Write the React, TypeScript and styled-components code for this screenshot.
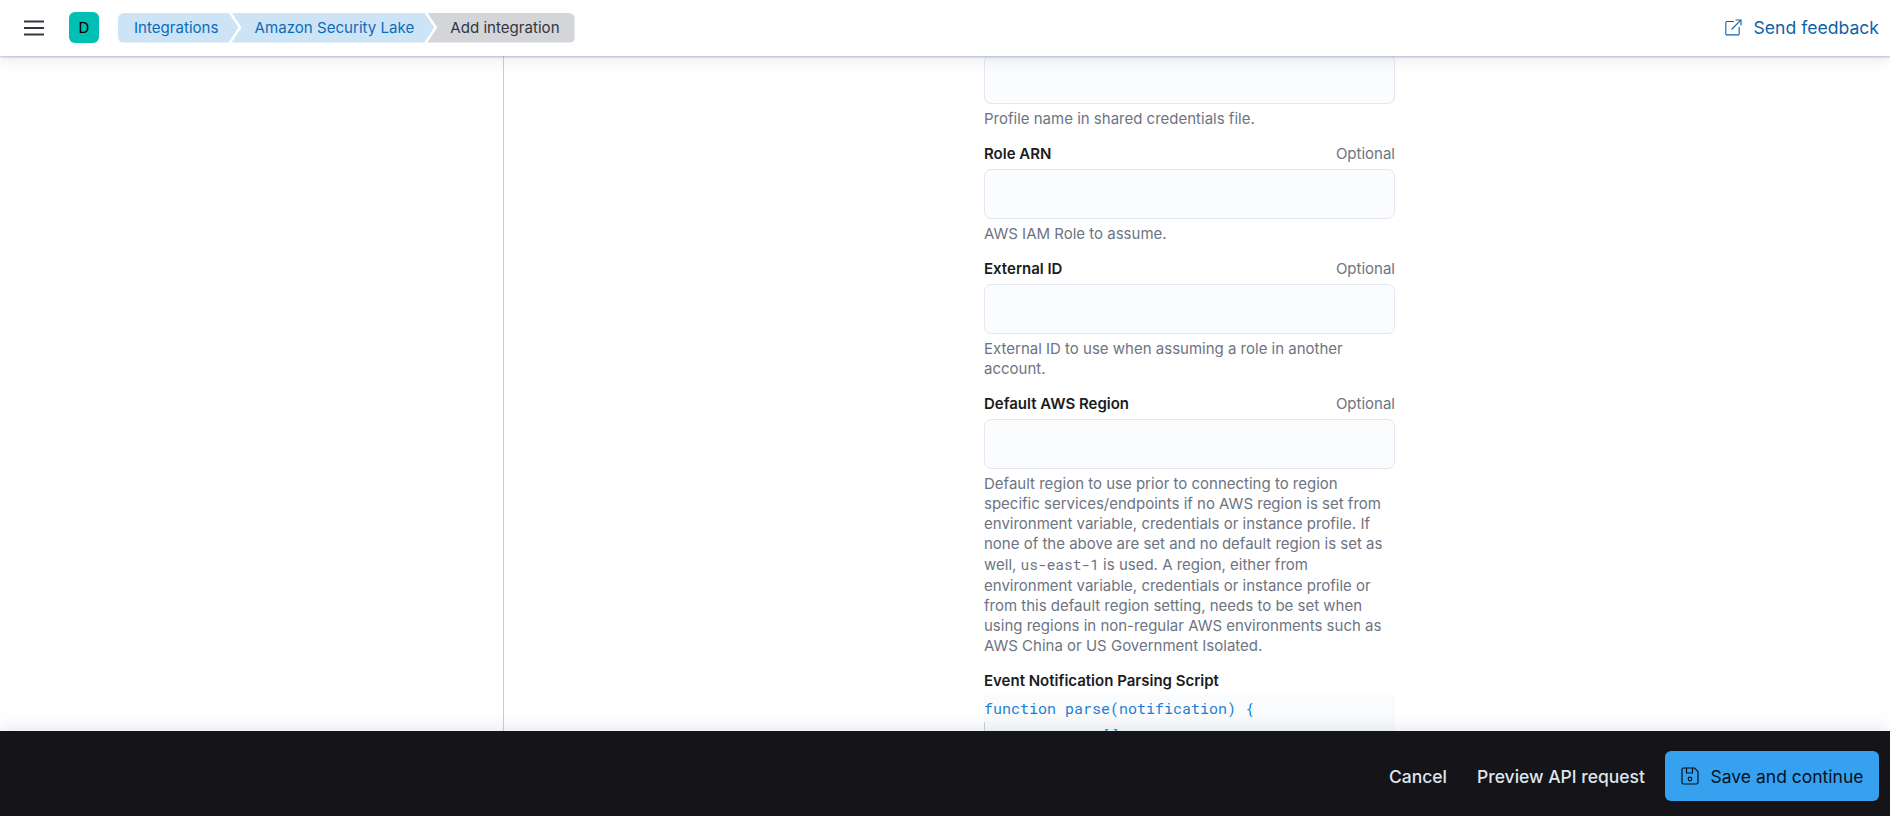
import { FC } from 'react';
import styled, { createGlobalStyle } from 'styled-components';

const GlobalStyle = createGlobalStyle`
  html, body {
    margin: 0;
    height: 100%;
    background: #fff;
    font-family: Inter, "Liberation Sans", sans-serif;
    overflow: hidden;
  }
  #root {
    height: 100%;
  }
`;

interface IField {
  label: string;
  children?: React.ReactNode;
}

const Field: FC<IField> = ({ label, children }) => (
  <FieldRoot>
    <FieldLabelRow>
      <FieldLabel>{label}</FieldLabel>
      <FieldOptional>Optional</FieldOptional>
    </FieldLabelRow>
    <TextInput />
    <HelpText>{children}</HelpText>
  </FieldRoot>
);

const App: FC = () => {
  return (
    <Root>
      <GlobalStyle />
      <Header>
        <MenuButton aria-label="Menu">
          <svg width="20" height="16" viewBox="0 0 20 16">
            <path d="M0 1.5h20M0 8h20M0 14.5h20" stroke="#343741" strokeWidth="2" fill="none" />
          </svg>
        </MenuButton>
        <Avatar>D</Avatar>
        <Breadcrumbs>
          <Crumb $first>Integrations</Crumb>
          <Crumb>Amazon Security Lake</Crumb>
          <Crumb $current>Add integration</Crumb>
        </Breadcrumbs>
        <Feedback>
          <svg width="17" height="17" viewBox="0 0 17 17" fill="none" stroke="currentColor" strokeWidth="1.1">
            <path d="M9 2.5H2a1.2 1.2 0 0 0-1.2 1.2v11a1.2 1.2 0 0 0 1.2 1.2h11a1.2 1.2 0 0 0 1.2-1.2V8" />
            <path d="M6.5 10.5 15.8 1.2M10.5 1h5.5v5.5" />
          </svg>
          Send feedback
        </Feedback>
      </Header>
      <Body>
        <Sidebar />
        <Content>
          <Form>
            <ClippedField>
              <TextInput />
              <HelpText>Profile name in shared credentials file.</HelpText>
            </ClippedField>
            <Field label="Role ARN">AWS IAM Role to assume.</Field>
            <Field label="External ID">External ID to use when assuming a role in another account.</Field>
            <Field label="Default AWS Region">
              Default region to use prior to connecting to region specific services/endpoints if no AWS
              region is set from environment variable, credentials or instance profile. If none of the
              above are set and no default region is set as well, <InlineCode>us-east-1</InlineCode> is
              used. A region, either from environment variable, credentials or instance profile or from
              this default region setting, needs to be set when using regions in non-regular AWS
              environments such as AWS China or US Government Isolated.
            </Field>
            <FieldRoot>
              <FieldLabelRow>
                <FieldLabel>Event Notification Parsing Script</FieldLabel>
              </FieldLabelRow>
              <CodeBlock>
                <CodeLine>function parse(notification) {'{'}</CodeLine>
                <CodeLine $indented>var ts = [];</CodeLine>
              </CodeBlock>
            </FieldRoot>
          </Form>
        </Content>
      </Body>
      <Footer>
        <FooterLink>Cancel</FooterLink>
        <FooterLink $last>Preview API request</FooterLink>
        <SaveButton>
          <svg width="18" height="18" viewBox="0 0 18 18" fill="none" stroke="currentColor" strokeWidth="1.2">
            <path d="M2.5 1h11L17 4.5V15.5a1.5 1.5 0 0 1-1.5 1.5h-13A1.5 1.5 0 0 1 1 15.5v-13A1.5 1.5 0 0 1 2.5 1Z" />
            <path d="M5.5 1v5h6V1" />
            <circle cx="9" cy="12" r="1.8" />
          </svg>
          Save and continue
        </SaveButton>
      </Footer>
    </Root>
  );
};

const Root = styled.div`
  height: 100%;
  display: flex;
  flex-direction: column;
`;

const Header = styled.header`
  position: relative;
  z-index: 2;
  height: 56px;
  flex: none;
  box-sizing: border-box;
  padding: 0 11px 1px 24px;
  display: flex;
  align-items: center;
  background: #fff;
  box-shadow: 0 1px 2px rgba(105, 112, 170, 0.45), 0 4px 14px rgba(152, 162, 179, 0.22);
`;

const MenuButton = styled.button`
  border: 0;
  padding: 0;
  background: none;
  display: flex;
  width: 20px;
  margin-right: 25px;
`;

const Avatar = styled.div`
  width: 30px;
  height: 31px;
  border-radius: 6px;
  background: #00bfb3;
  color: #000;
  font-size: 15px;
  display: flex;
  align-items: center;
  justify-content: center;
  margin-right: 19px;
`;

const Breadcrumbs = styled.nav`
  display: flex;
  height: 30px;
`;

const Crumb = styled.div<{ $first?: boolean; $current?: boolean }>`
  display: flex;
  align-items: center;
  font-size: 15.1px;
  color: ${(p) => (p.$current ? '#343741' : '#0f6cb6')};
  background: ${(p) => (p.$current ? '#d3d5d9' : '#cce4f6')};
  padding: 0 ${(p) => (p.$current ? '15px' : '20px')} 0 ${(p) => (p.$first ? '16px' : '23px')};
  margin-left: ${(p) => (p.$first ? '0' : '-7px')};
  border-radius: ${(p) => (p.$first ? '6px 0 0 6px' : p.$current ? '0 6px 6px 0' : '0')};
  clip-path: ${(p) =>
    p.$current
      ? 'polygon(0 0, 100% 0, 100% 100%, 0 100%, 10px 50%)'
      : p.$first
        ? 'polygon(0 0, calc(100% - 10px) 0, 100% 50%, calc(100% - 10px) 100%, 0 100%)'
        : 'polygon(0 0, calc(100% - 10px) 0, 100% 50%, calc(100% - 10px) 100%, 0 100%, 10px 50%)'};
`;

const Feedback = styled.a`
  margin-left: auto;
  display: flex;
  align-items: center;
  gap: 12px;
  font-size: 17.6px;
  color: #0f62a8;
`;

const Body = styled.div`
  flex: 1;
  min-height: 0;
  display: flex;
  overflow: hidden;
`;

const Sidebar = styled.aside`
  width: 503px;
  flex: none;
  border-right: 1px solid #c6cde0;
`;

const Content = styled.main`
  flex: 1;
  min-width: 0;
`;

const Form = styled.div`
  width: 411px;
  margin-left: 480px;
  display: flex;
  flex-direction: column;
  gap: 15px;
`;

const FieldRoot = styled.div`
  display: flex;
  flex-direction: column;
`;

const ClippedField = styled(FieldRoot)`
  margin-top: -2px;
`;

const FieldLabelRow = styled.div`
  display: flex;
  justify-content: space-between;
  align-items: center;
  height: 18px;
  margin-bottom: 7px;
`;

const FieldLabel = styled.label`
  font-size: 15px;
  font-weight: 600;
  color: #1a1c21;
`;

const FieldOptional = styled.span`
  font-size: 15px;
  color: #6d7482;
`;

const TextInput = styled.input`
  display: block;
  box-sizing: border-box;
  width: 100%;
  height: 50px;
  border: 1px solid #e4e6f0;
  border-radius: 7px;
  background: #fbfcfd;
  outline: none;
`;

const HelpText = styled.div`
  margin-top: 5px;
  font-size: 15px;
  line-height: 20px;
  color: #6d7482;
`;

const InlineCode = styled.code`
  font-family: "Roboto Mono", "Liberation Mono", monospace;
  font-size: 14.5px;
  line-height: 22px;
`;

const CodeBlock = styled.div`
  margin-top: -1px;
  background: #fafbfd;
  font-family: "Roboto Mono", "Liberation Mono", monospace;
  font-size: 15px;
  line-height: 27px;
  color: #1a7fd4;
`;

const CodeLine = styled.div<{ $indented?: boolean }>`
  white-space: pre;
  box-sizing: border-box;
  padding-left: ${(p) => (p.$indented ? '36px' : '0')};
  border-left: ${(p) => (p.$indented ? '1px solid #c6cde0' : '0')};
`;

const Footer = styled.footer`
  position: relative;
  z-index: 2;
  height: 85px;
  flex: none;
  box-sizing: border-box;
  padding: 5px 11px 0 0;
  display: flex;
  align-items: center;
  justify-content: flex-end;
  background: #141419;
  box-shadow: 0 -4px 14px rgba(152, 162, 179, 0.22);
`;

const FooterLink = styled.a<{ $last?: boolean }>`
  font-size: 17.5px;
  font-weight: 500;
  color: #dfe5ef;
  margin-right: ${(p) => (p.$last ? '20px' : '30px')};
`;

const SaveButton = styled.button`
  height: 50px;
  width: 214px;
  border: 0;
  border-radius: 6px;
  background: #36a2ef;
  color: #07101f;
  display: flex;
  align-items: center;
  justify-content: center;
  gap: 12px;
  font-family: inherit;
  font-size: 17.5px;
`;

export default App;
